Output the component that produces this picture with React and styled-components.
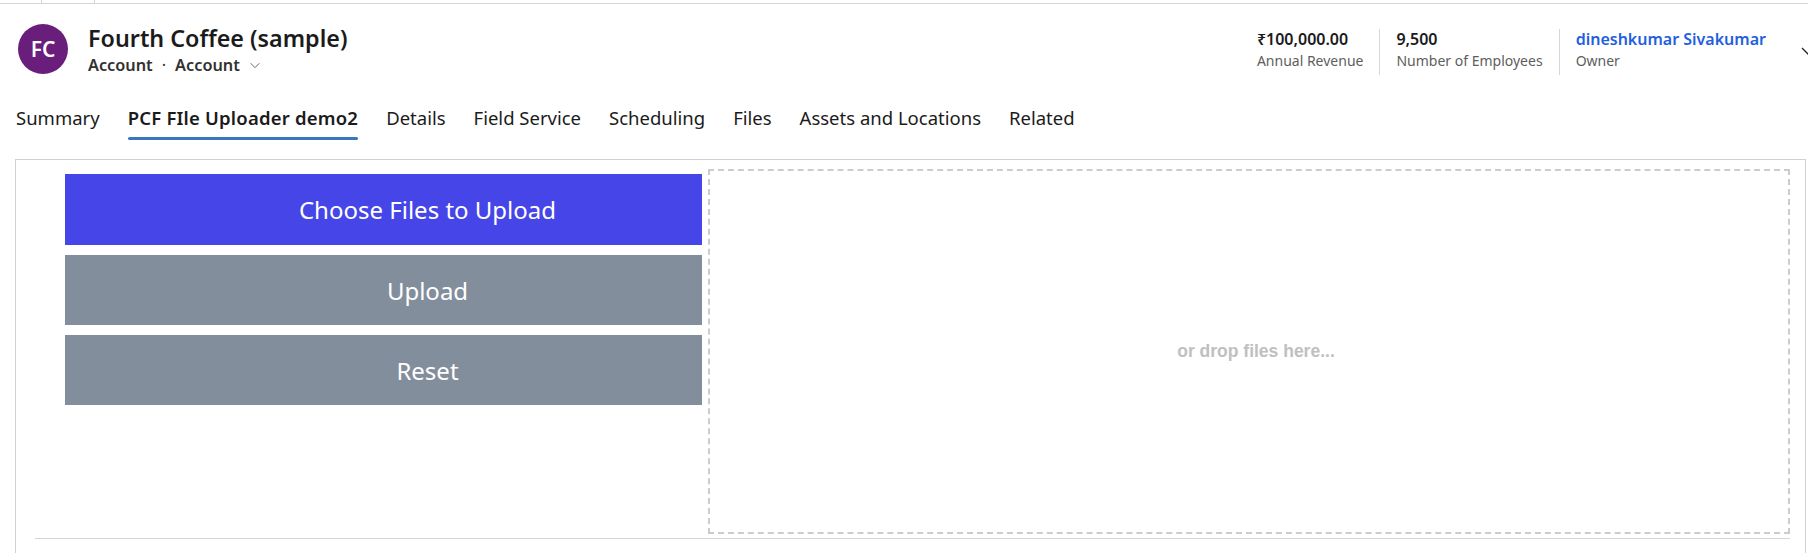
import React from 'react';
import styled, { createGlobalStyle } from 'styled-components';

const GlobalStyle = createGlobalStyle`
  html, body {
    margin: 0;
    padding: 0;
    background: #ffffff;
  }
  body {
    font-family: 'Noto Sans', 'Open Sans', sans-serif;
    color: #242424;
    overflow: hidden;
  }
`;

const tabs = [
  'Summary',
  'PCF FIle Uploader demo2',
  'Details',
  'Field Service',
  'Scheduling',
  'Files',
  'Assets and Locations',
  'Related',
];

const metrics = [
  { value: '₹100,000.00', label: 'Annual Revenue' },
  { value: '9,500', label: 'Number of Employees' },
  { value: 'dineshkumar Sivakumar', label: 'Owner', link: true },
];

export default function App() {
  return (
    <>
      <GlobalStyle />
      <Page>
        <TopStrip>
          <StripCell $w={42} />
          <StripCell $w={53} />
        </TopStrip>

        <Header>
          <Avatar>FC</Avatar>
          <TitleBlock>
            <Title>Fourth Coffee (sample)</Title>
            <Subtitle>
              <span>Account</span>
              <Dot>·</Dot>
              <span>Account</span>
              <ChevronSmall viewBox="0 0 16 16">
                <path d="M3 6l5 5 5-5" fill="none" stroke="#605e5c" strokeWidth="1.1" />
              </ChevronSmall>
            </Subtitle>
          </TitleBlock>

          <Metrics>
            {metrics.map((m, i) => (
              <Metric key={i} $first={i === 0}>
                <MetricValue $link={m.link}>{m.value}</MetricValue>
                <MetricLabel>{m.label}</MetricLabel>
              </Metric>
            ))}
          </Metrics>
          <ExpandChevron viewBox="0 0 20 20">
            <path d="M2 6l8 8 8-8" fill="none" stroke="#242424" strokeWidth="1.3" />
          </ExpandChevron>
        </Header>

        <TabBar>
          {tabs.map((t, i) => (
            <Tab key={t} $active={i === 1}>
              <TabText $active={i === 1}>{t}</TabText>
            </Tab>
          ))}
        </TabBar>

        <Section>
          <UploaderRow>
            <ButtonColumn>
              <ActionButton $primary>Choose Files to Upload</ActionButton>
              <ActionButton>Upload</ActionButton>
              <ActionButton>Reset</ActionButton>
            </ButtonColumn>
            <DropZone>or drop files here...</DropZone>
          </UploaderRow>
          <Divider />
        </Section>
      </Page>
    </>
  );
}

const Page = styled.div`
  width: 1808px;
  height: 553px;
  overflow: hidden;
  display: flex;
  flex-direction: column;
`;

const TopStrip = styled.div`
  display: flex;
  height: 3px;
  border-bottom: 1px solid #d6d6d6;
`;

const StripCell = styled.div`
  width: ${p => p.$w}px;
  border-right: 1px solid #d6d6d6;
  box-sizing: border-box;
`;

const Header = styled.div`
  display: flex;
  align-items: flex-start;
  height: 92px;
  padding: 20px 0 0 18px;
  box-sizing: border-box;
  position: relative;
`;

const Avatar = styled.div`
  width: 50px;
  height: 50px;
  border-radius: 50%;
  background: #6a1e7c;
  color: #ffffff;
  display: flex;
  align-items: center;
  justify-content: center;
  font-size: 21px;
  font-weight: 600;
  flex-shrink: 0;
`;

const TitleBlock = styled.div`
  display: flex;
  flex-direction: column;
  margin-left: 20px;
  margin-top: -2px;
`;

const Title = styled.div`
  font-size: 23.3px;
  font-weight: 600;
  line-height: 32px;
  color: #1b1b1b;
`;

const Subtitle = styled.div`
  display: flex;
  align-items: center;
  font-size: 16.3px;
  font-weight: 600;
  line-height: 22px;
  color: #323130;
`;

const Dot = styled.span`
  margin: 0 9px;
  font-weight: 400;
`;

const ChevronSmall = styled.svg`
  width: 14px;
  height: 14px;
  margin-left: 8px;
`;

const Metrics = styled.div`
  display: flex;
  margin-left: auto;
  margin-right: 26px;
  margin-top: 5px;
`;

const Metric = styled.div`
  display: flex;
  flex-direction: column;
  height: 46px;
  padding: 0 16px;
  border-left: ${p => (p.$first ? 'none' : '1px solid #d6d6d6')};
`;

const MetricValue = styled.div`
  font-size: 16px;
  font-weight: 600;
  line-height: 20px;
  color: ${p => (p.$link ? '#1f5fe0' : '#1b1b1b')};
`;

const MetricLabel = styled.div`
  font-size: 14px;
  line-height: 20px;
  margin-top: 2px;
  color: #605e5c;
`;

const ExpandChevron = styled.svg`
  position: absolute;
  right: -12px;
  top: 38px;
  width: 20px;
  height: 20px;
`;

const TabBar = styled.div`
  display: flex;
  padding-left: 2px;
  height: 44px;
  margin-bottom: 19px;
`;

const Tab = styled.div`
  display: flex;
  flex-direction: column;
  align-items: center;
  padding: 9px 14px 0;
`;

const TabText = styled.span`
  font-size: 18.5px;
  line-height: 26px;
  font-weight: ${p => (p.$active ? 600 : 400)};
  letter-spacing: ${p => (p.$active ? '0.2px' : '0')};
  color: #1b1b1b;

  &::after {
    content: '';
    display: ${p => (p.$active ? 'block' : 'none')};
    height: 3px;
    border-radius: 2px;
    background: #3a75bd;
    margin-top: 6px;
  }
`;

const Section = styled.div`
  margin-left: 15px;
  width: 1791px;
  flex: 1;
  border: 1px solid #d1d1d1;
  border-bottom: none;
  box-sizing: border-box;
  padding: 9px 15px 0 19px;
  display: flex;
  flex-direction: column;
`;

const UploaderRow = styled.div`
  display: flex;
  gap: 6px;
`;

const ButtonColumn = styled.div`
  display: flex;
  flex-direction: column;
  gap: 10px;
  width: 637px;
  margin-left: 30px;
  margin-top: 5px;
`;

const ActionButton = styled.div`
  height: ${p => (p.$primary ? 71 : 70)}px;
  box-sizing: border-box;
  padding-left: 88px;
  display: flex;
  align-items: center;
  justify-content: center;
  background: ${p => (p.$primary ? '#4545e8' : '#838e9d')};
  color: #ffffff;
  font-size: 24px;
`;

const DropZone = styled.div`
  flex: 1;
  height: 365px;
  box-sizing: border-box;
  border: 2px dashed #cccccc;
  padding-left: 14px;
  display: flex;
  align-items: center;
  justify-content: center;
  font-family: 'Liberation Sans', Arial, sans-serif;
  font-weight: 700;
  font-size: 17.5px;
  color: #c0c0c0;
`;

const Divider = styled.div`
  height: 1px;
  background: #d6d6d6;
  margin-top: 4px;
`;
